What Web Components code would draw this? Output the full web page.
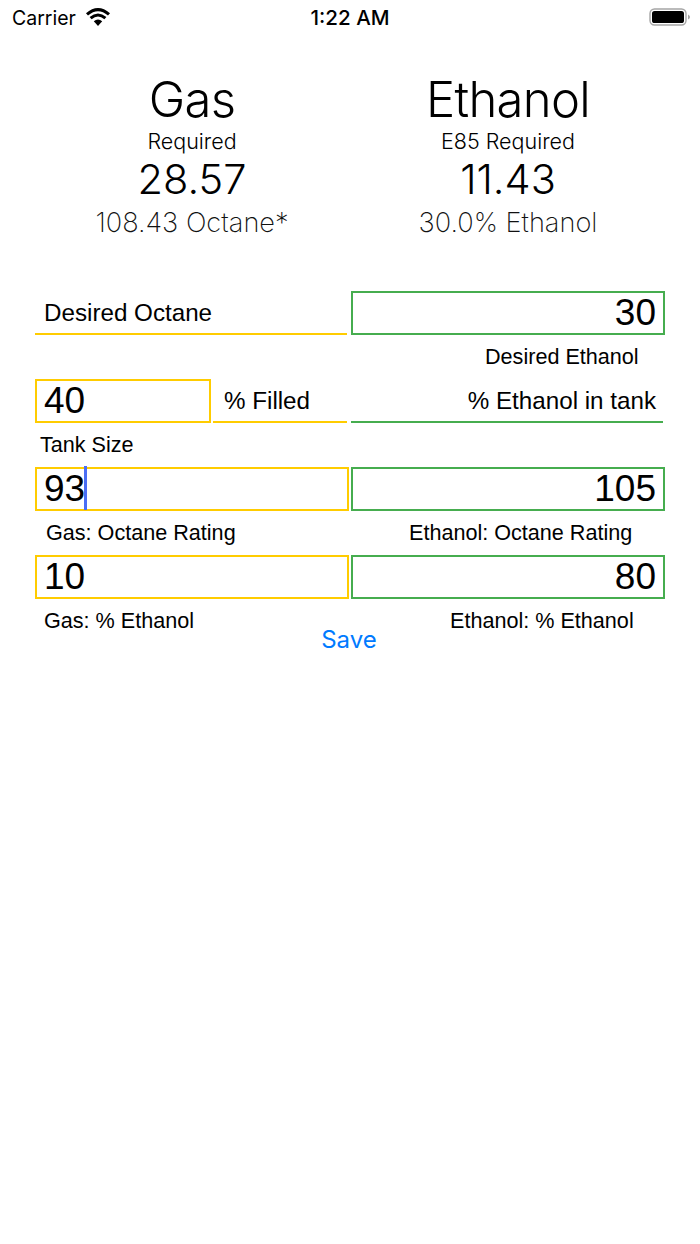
<!DOCTYPE html>
<html>
<head>
<meta charset="utf-8">
<style>
    html, body { margin: 0; padding: 0; background: #fff; }
    body { width: 700px; height: 1244px; overflow: hidden; font-family: "Liberation Sans", sans-serif; color: #000; }
</style>
</head>
<body>
<status-bar></status-bar>
<result-panel></result-panel>
<mix-form></mix-form>

<script>
class StatusBar extends HTMLElement {
    constructor() {
        super();
        this.attachShadow({ mode: 'open' });
        this.shadowRoot.innerHTML = `
            <style>
                :host { display: flex; align-items: center; justify-content: space-between; height: 36px; padding: 0 9px 0 12px; font-family: Inter, "Liberation Sans", sans-serif; font-size: 19.5px; }
                .left { display: flex; align-items: center; gap: 9px; width: 200px; }
                .right { display: flex; justify-content: flex-end; width: 203px; margin-top: -2px; }
                .time { font-size: 20.6px; font-weight: 500; margin-top: -1px; }
                svg { display: block; }
            </style>
            <div class="left">
                <span>Carrier</span>
                <svg width="26" height="19" viewBox="0 0 26 19" style="margin-top:-2px">
                    <path d="M13 18 L8.8 13.3 Q13 9.6 17.2 13.3 Z" fill="#000"/>
                    <path d="M5.6 10.2 Q13 3.8 20.4 10.2" fill="none" stroke="#000" stroke-width="3.1"/>
                    <path d="M2 6.4 Q13 -3 24 6.4" fill="none" stroke="#000" stroke-width="3.1"/>
                </svg>
            </div>
            <span class="time">1:22 AM</span>
            <div class="right">
                <svg width="42" height="18" viewBox="0 0 42 18">
                    <rect x="1" y="1" width="36" height="16" rx="4.5" fill="none" stroke="#a5a5a5" stroke-width="1.4"/>
                    <rect x="3" y="3" width="32" height="12" rx="2.6" fill="#000"/>
                    <path d="M39 6.5 Q41 7.5 41 9 Q41 10.5 39 11.5 Z" fill="#a5a5a5"/>
                </svg>
            </div>
        `;
    }
}

class ResultColumn extends HTMLElement {
    constructor() {
        super();
        this.attachShadow({ mode: 'open' });
        this.shadowRoot.innerHTML = `
            <style>
                :host { display: flex; flex-direction: column; align-items: center; width: 316px; font-family: Inter, "Liberation Sans", sans-serif; white-space: nowrap; }
                .title { font-size: 49px; font-weight: 300; line-height: 58px; letter-spacing: -0.7px; }
                .req { font-size: 21.5px; font-weight: 300; line-height: 24px; }
                .amount { font-size: 41.5px; font-weight: 300; line-height: 52px; }
                .note { font-size: 27.2px; font-weight: 200; line-height: 36px; color: #111; }
            </style>
            <div class="title">${this.getAttribute('title')}</div>
            <div class="req">${this.getAttribute('req')}</div>
            <div class="amount">${this.getAttribute('amount')}</div>
            <div class="note">${this.getAttribute('note')}</div>
        `;
    }
}

class ResultPanel extends HTMLElement {
    constructor() {
        super();
        this.attachShadow({ mode: 'open' });
        this.shadowRoot.innerHTML = `
            <style>
                :host { display: flex; padding: 35px 0 0 34px; height: 220px; box-sizing: border-box; }
            </style>
            <result-column title="Gas" req="Required" amount="28.57" note="108.43 Octane*"></result-column>
            <result-column title="Ethanol" req="E85 Required" amount="11.43" note="30.0% Ethanol"></result-column>
        `;
    }
}

// one text field, boxed or underlined, yellow or green
class FuelField extends HTMLElement {
    constructor() {
        super();
        this.attachShadow({ mode: 'open' });
        const color = this.getAttribute('color') === 'green' ? '#46ad4f' : '#ffcc00';
        this.shadowRoot.innerHTML = `
            <style>
                :host { display: flex; align-items: center; height: 44px; box-sizing: border-box; padding: 0 7px 0 7px; position: relative; font-size: 37px; border: 2px solid ${color}; min-width: 0; white-space: nowrap; }
                :host([align=right]) { justify-content: flex-end; }
                :host([line]) { border-width: 0 0 2px 0; font-size: 24.2px; padding: 2px 8px 0 9px; }
                .caret { position: absolute; top: -3px; bottom: -1px; width: 3px; background: #4a6ef5; }
            </style>
            <slot></slot>
            ${this.hasAttribute('caret') ? '<span class="caret" style="left:' + this.getAttribute('caret') + 'px"></span>' : ''}
        `;
    }
}

class FieldLabel extends HTMLElement {
    constructor() {
        super();
        this.attachShadow({ mode: 'open' });
        this.shadowRoot.innerHTML = `
            <style>
                :host { display: flex; align-items: center; height: 44px; font-size: 21.6px; white-space: nowrap; min-width: 0; }
            </style>
            <slot></slot>
        `;
    }
}

class MixForm extends HTMLElement {
    constructor() {
        super();
        this.attachShadow({ mode: 'open' });
        this.shadowRoot.innerHTML = `
            <style>
                :host { display: grid; grid-template-columns: 176px 2px 134px 4px 314px; width: 630px; margin: 35px 0 0 35px; }
                .l { grid-column: 1 / span 3; }
                .wide { grid-column: 1 / span 4; }
                .r { grid-column: 5; }
                .save { grid-column: 1 / -1; justify-self: center; margin: -18px 2px 0 0; color: #007aff; font-size: 24px; font-family: Inter, "Liberation Sans", sans-serif; line-height: 30px; }
            </style>
            <fuel-field class="l" line color="yellow">Desired Octane</fuel-field>
            <fuel-field class="r" color="green" align="right">30</fuel-field>

            <field-label class="r" style="padding-left:134px">Desired Ethanol</field-label>

            <fuel-field color="yellow" style="grid-column:1">40</fuel-field>
            <fuel-field line color="yellow" style="grid-column:3;padding-left:11px">% Filled</fuel-field>
            <fuel-field class="r" line color="green" align="right" style="margin-right:2px;padding-right:7px">% Ethanol in tank</fuel-field>

            <field-label class="wide" style="padding-left:5px">Tank Size</field-label>
            <span></span>

            <fuel-field class="wide" color="yellow" caret="47" style="margin-right:2px">93</fuel-field>
            <fuel-field class="r" color="green" align="right">105</fuel-field>

            <field-label class="l" style="padding-left:11px">Gas: Octane Rating</field-label>
            <field-label class="r" style="padding-left:58px">Ethanol: Octane Rating</field-label>

            <fuel-field class="wide" color="yellow" style="margin-right:2px">10</fuel-field>
            <fuel-field class="r" color="green" align="right">80</fuel-field>

            <field-label class="l" style="padding-left:9px">Gas: % Ethanol</field-label>
            <field-label class="r" style="padding-left:99px">Ethanol: % Ethanol</field-label>

            <div class="save">Save</div>
        `;
    }
}

customElements.define('status-bar', StatusBar);
customElements.define('result-column', ResultColumn);
customElements.define('result-panel', ResultPanel);
customElements.define('fuel-field', FuelField);
customElements.define('field-label', FieldLabel);
customElements.define('mix-form', MixForm);
</script>
</body>
</html>
